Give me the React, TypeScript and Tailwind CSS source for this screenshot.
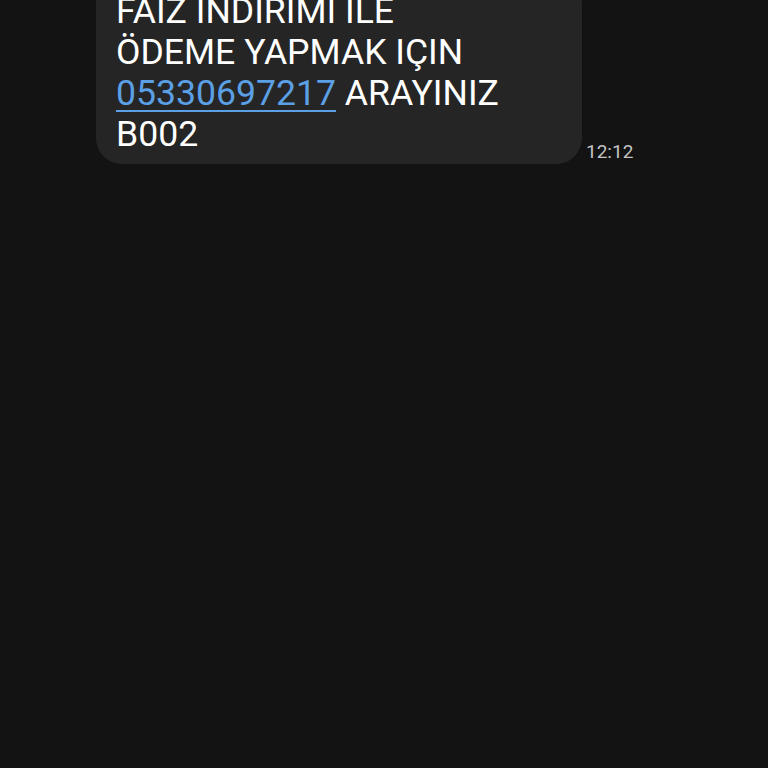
export default function App() {
  return (
    <div className="h-[768px] w-[768px] overflow-hidden bg-[#131313] font-['Roboto',sans-serif]">
      <div className="-mt-[23px] flex items-end pl-[96px]">
        <div className="w-[486px] rounded-[26px] bg-[#252525] pb-[9px] pl-[20px] pr-[12px] pt-[14px] text-[35.6px] leading-[41px] text-white">
          FAIZ INDIRIMI ILE
          <br />
          ÖDEME YAPMAK IÇIN
          <br />
          <span className="text-[#5b9fe4] underline decoration-[2px] underline-offset-[5px]">05330697217</span> ARAYINIZ
          <br />
          B002
        </div>
        <div className="mb-[1px] ml-[4px] text-[19px] leading-[22px] text-[#c4c4c4]">12:12</div>
      </div>
    </div>
  );
}
